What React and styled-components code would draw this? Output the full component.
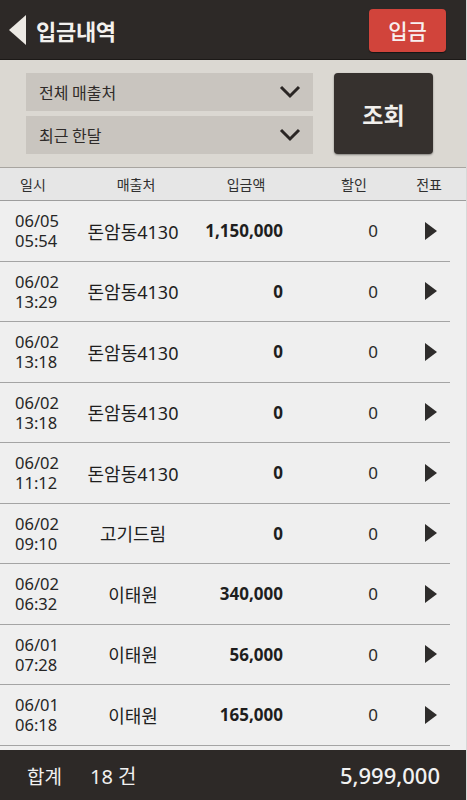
import React from "react";
import styled, { createGlobalStyle } from "styled-components";

const GlobalStyle = createGlobalStyle`
  * { box-sizing: border-box; }
  body {
    margin: 0;
    font-family: "Noto Sans", "Noto Sans CJK KR", sans-serif;
    background: #2d2927;
  }
`;

const Screen = styled.div`
  width: 467px;
  height: 800px;
  display: flex;
  flex-direction: column;
  overflow: hidden;
  background: #efefef;
  border-right: 1px solid #d8d8d8;
`;

const TopBar = styled.div`
  height: 60px;
  flex-shrink: 0;
  background: #2d2927;
  display: flex;
  align-items: center;
  justify-content: space-between;
  padding: 0 20px 0 9px;
  border-bottom: 1px solid #1c1917;
`;

const BackArea = styled.div`
  display: flex;
  align-items: center;
  gap: 9px;
`;

const Title = styled.div`
  color: #f3f1ee;
  font-size: 22px;
  font-weight: 700;
  letter-spacing: -0.3px;
  font-family: "Noto Sans CJK KR", sans-serif;
`;

const DepositBtn = styled.div`
  width: 77px;
  height: 43px;
  margin-top: 1px;
  border-radius: 4px;
  background: #d1443b;
  color: #f8f0f0;
  font-size: 21px;
  font-weight: 500;
  font-family: "Noto Sans CJK KR", sans-serif;
  display: flex;
  align-items: center;
  justify-content: center;
  box-shadow: 0 1px 1px rgba(0, 0, 0, 0.5);
`;

const FilterPanel = styled.div`
  height: 108px;
  flex-shrink: 0;
  background: #dbd8d2;
  display: flex;
  align-items: center;
  padding: 0 33px 0 26px;
  gap: 21px;
  border-bottom: 1px solid #a8a5a0;
`;

const SelectStack = styled.div`
  flex: 1;
  display: flex;
  flex-direction: column;
  gap: 5px;
`;

const SelectBox = styled.div`
  height: 38px;
  background: #c9c5bf;
  display: flex;
  align-items: center;
  justify-content: space-between;
  padding: 0 12px 0 13px;
  color: #2f2b29;
  font-size: 16px;
  font-family: "Noto Sans CJK KR", sans-serif;
`;

const SearchBtn = styled.div`
  width: 99px;
  height: 81px;
  border-radius: 4px;
  background: #36312e;
  color: #f1efec;
  font-size: 23px;
  font-weight: 700;
  font-family: "Noto Sans CJK KR", sans-serif;
  display: flex;
  align-items: center;
  justify-content: center;
  box-shadow: 0 1px 2px rgba(0, 0, 0, 0.4);
`;

const HeadRow = styled.div`
  height: 33px;
  flex-shrink: 0;
  display: flex;
  align-items: center;
  background: #e6e6e6;
  border-bottom: 1px solid #9d9d9d;
  color: #2f2f2f;
  font-size: 14px;
  font-family: "Noto Sans CJK KR", sans-serif;
`;

const HeadCell = styled.div`
  width: ${(p) => p.$w}px;
  flex-shrink: 0;
  display: flex;
  justify-content: center;
  white-space: nowrap;
`;

const List = styled.div`
  flex: 1;
  overflow: hidden;
  background: #efefef;
`;

const Row = styled.div`
  display: grid;
  grid-template-columns: 15px 64px 108px 96px 95px 1fr;
  align-items: center;
  height: 60.5px;
  border-bottom: 1px solid #a4a4a4;
  margin-right: 16px;
  color: #1e1e1e;
`;

const DateCell = styled.div`
  grid-column: 2;
  display: flex;
  flex-direction: column;
  gap: 0;
  padding-top: 1px;
`;

const DateLine = styled.div`
  font-size: 16.5px;
  line-height: 20px;
  height: 20px;
  color: #262626;
`;

const Merchant = styled.div`
  font-size: 18px;
  text-align: center;
  white-space: nowrap;
`;

const Amount = styled.div`
  font-size: 17px;
  font-weight: 700;
  text-align: right;
`;

const Discount = styled.div`
  font-size: 17px;
  text-align: right;
  color: #2a2a2a;
`;

const ArrowCell = styled.div`
  display: flex;
  justify-content: flex-end;
  padding-right: 13px;
`;

const Footer = styled.div`
  height: 50px;
  flex-shrink: 0;
  background: #2d2927;
  display: flex;
  align-items: center;
  padding: 0 26px 0 27px;
  color: #f1f1f1;
`;

const SumLabel = styled.div`
  font-size: 19px;
  font-family: "Noto Sans CJK KR", sans-serif;
  margin-right: 28px;
`;

const SumCount = styled.div`
  flex: 1;
  font-size: 20px;
`;

const SumTotal = styled.div`
  font-size: 22px;
  font-weight: 500;
`;

const Chevron = () => (
  <svg width="22" height="14" viewBox="0 0 22 14">
    <path d="M2 2 L11 11 L20 2" fill="none" stroke="#2a2624" strokeWidth="3" />
  </svg>
);

const BackTriangle = () => (
  <svg width="18" height="30" viewBox="0 0 18 30">
    <path d="M17 0 L17 30 L0 15 Z" fill="#ece9e4" />
  </svg>
);

const PlayArrow = () => (
  <svg width="12" height="18" viewBox="0 0 12 18">
    <path d="M0 0 L12 9 L0 18 Z" fill="#2e2c2b" />
  </svg>
);

const rows = [
  ["06/05", "05:54", "돈암동4130", "1,150,000"],
  ["06/02", "13:29", "돈암동4130", "0"],
  ["06/02", "13:18", "돈암동4130", "0"],
  ["06/02", "13:18", "돈암동4130", "0"],
  ["06/02", "11:12", "돈암동4130", "0"],
  ["06/02", "09:10", "고기드림", "0"],
  ["06/02", "06:32", "이태원", "340,000"],
  ["06/01", "07:28", "이태원", "56,000"],
  ["06/01", "06:18", "이태원", "165,000"],
];

export default function App() {
  return (
    <Screen>
      <GlobalStyle />
      <TopBar>
        <BackArea>
          <BackTriangle />
          <Title>입금내역</Title>
        </BackArea>
        <DepositBtn>입금</DepositBtn>
      </TopBar>
      <FilterPanel>
        <SelectStack>
          <SelectBox>
            전체 매출처
            <Chevron />
          </SelectBox>
          <SelectBox>
            최근 한달
            <Chevron />
          </SelectBox>
        </SelectStack>
        <SearchBtn>조회</SearchBtn>
      </FilterPanel>
      <HeadRow>
        <HeadCell $w={66}>일시</HeadCell>
        <HeadCell $w={140}>매출처</HeadCell>
        <HeadCell $w={80}>입금액</HeadCell>
        <HeadCell $w={136}>할인</HeadCell>
        <HeadCell $w={14}>전표</HeadCell>
      </HeadRow>
      <List>
        {rows.map((r, i) => (
          <Row key={i}>
            <DateCell>
              <DateLine>{r[0]}</DateLine>
              <DateLine>{r[1]}</DateLine>
            </DateCell>
            <Merchant>{r[2]}</Merchant>
            <Amount>{r[3]}</Amount>
            <Discount>0</Discount>
            <ArrowCell>
              <PlayArrow />
            </ArrowCell>
          </Row>
        ))}
      </List>
      <Footer>
        <SumLabel>합계</SumLabel>
        <SumCount>18 건</SumCount>
        <SumTotal>5,999,000</SumTotal>
      </Footer>
    </Screen>
  );
}
